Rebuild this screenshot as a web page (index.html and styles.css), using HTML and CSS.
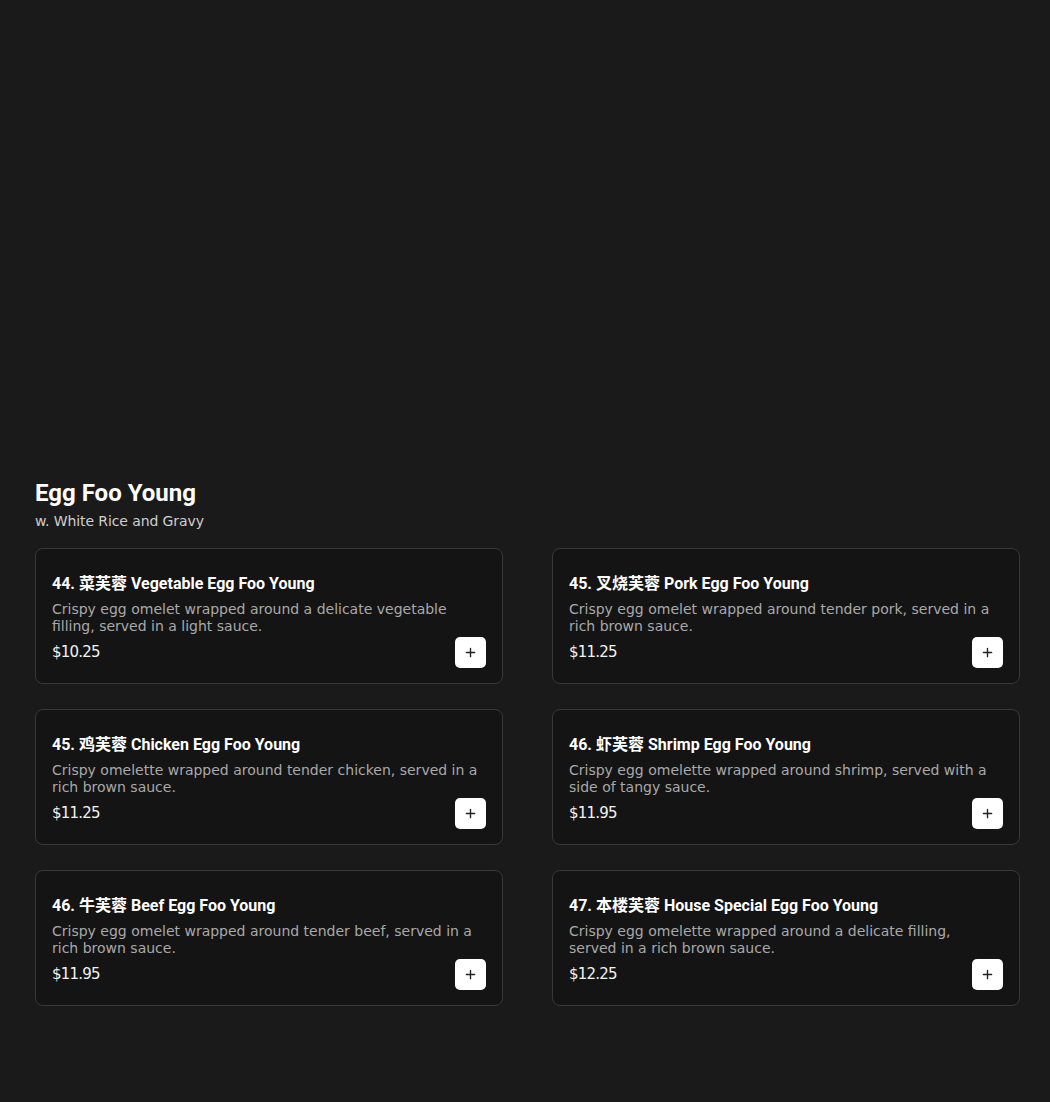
FILE: index.html
```html
<!DOCTYPE html>
<html lang="en">
<head>
<meta charset="utf-8">
<title>Egg Foo Young</title>
<link rel="stylesheet" href="styles.css">
</head>
<body>
<main class="page">
  <section class="category">
    <header class="category-head">
      <h2 class="category-title">Egg Foo Young</h2>
      <p class="category-sub">w. White Rice and Gravy</p>
    </header>
    <div class="grid">
      <article class="card">
        <h3 class="item-name">44. 菜芙蓉 Vegetable Egg Foo Young</h3>
        <p class="item-desc">Crispy egg omelet wrapped around a delicate vegetable filling, served in a light sauce.</p>
        <div class="item-foot"><span class="price">$10.25</span><button class="add" aria-label="Add"><svg viewBox="0 0 12 12" width="11" height="11"><path d="M6 1.5v9M1.5 6h9" stroke="#222" stroke-width="1.5" stroke-linecap="round"/></svg></button></div>
      </article>
      <article class="card">
        <h3 class="item-name">45. 叉烧芙蓉 Pork Egg Foo Young</h3>
        <p class="item-desc">Crispy egg omelet wrapped around tender pork, served in a rich brown sauce.</p>
        <div class="item-foot"><span class="price">$11.25</span><button class="add" aria-label="Add"><svg viewBox="0 0 12 12" width="11" height="11"><path d="M6 1.5v9M1.5 6h9" stroke="#222" stroke-width="1.5" stroke-linecap="round"/></svg></button></div>
      </article>
      <article class="card">
        <h3 class="item-name">45. 鸡芙蓉 Chicken Egg Foo Young</h3>
        <p class="item-desc">Crispy omelette wrapped around tender chicken, served in a rich brown sauce.</p>
        <div class="item-foot"><span class="price">$11.25</span><button class="add" aria-label="Add"><svg viewBox="0 0 12 12" width="11" height="11"><path d="M6 1.5v9M1.5 6h9" stroke="#222" stroke-width="1.5" stroke-linecap="round"/></svg></button></div>
      </article>
      <article class="card">
        <h3 class="item-name">46. 虾芙蓉 Shrimp Egg Foo Young</h3>
        <p class="item-desc">Crispy egg omelette wrapped around shrimp, served with a side of tangy sauce.</p>
        <div class="item-foot"><span class="price">$11.95</span><button class="add" aria-label="Add"><svg viewBox="0 0 12 12" width="11" height="11"><path d="M6 1.5v9M1.5 6h9" stroke="#222" stroke-width="1.5" stroke-linecap="round"/></svg></button></div>
      </article>
      <article class="card">
        <h3 class="item-name">46. 牛芙蓉 Beef Egg Foo Young</h3>
        <p class="item-desc">Crispy egg omelet wrapped around tender beef, served in a rich brown sauce.</p>
        <div class="item-foot"><span class="price">$11.95</span><button class="add" aria-label="Add"><svg viewBox="0 0 12 12" width="11" height="11"><path d="M6 1.5v9M1.5 6h9" stroke="#222" stroke-width="1.5" stroke-linecap="round"/></svg></button></div>
      </article>
      <article class="card">
        <h3 class="item-name">47. 本楼芙蓉 House Special Egg Foo Young</h3>
        <p class="item-desc">Crispy egg omelette wrapped around a delicate filling, served in a rich brown sauce.</p>
        <div class="item-foot"><span class="price">$12.25</span><button class="add" aria-label="Add"><svg viewBox="0 0 12 12" width="11" height="11"><path d="M6 1.5v9M1.5 6h9" stroke="#222" stroke-width="1.5" stroke-linecap="round"/></svg></button></div>
      </article>
    </div>
  </section>
</main>
</body>
</html>
```
FILE: styles.css
```css
html, body {
  margin: 0;
  padding: 0;
  background: #1a1a1a;
}
body {
  font-family: "DejaVu Sans", "Noto Sans CJK SC", sans-serif;
  color: #f2f2f2;
  min-height: 1102px;
}
.page {
  padding: 477px 30px 0 35px;
}
.category-head {
  margin-bottom: 17px;
}
.category-title {
  margin: 0;
  font-family: Roboto, "Noto Sans CJK SC", sans-serif;
  font-weight: 700;
  font-size: 24px;
  line-height: 32px;
  color: #ffffff;
}
.category-sub {
  margin: 2px 0 0;
  font-size: 14px;
  line-height: 20px;
  letter-spacing: -0.1px;
  color: #cfcfcf;
}
.grid {
  display: grid;
  grid-template-columns: 468px 468px;
  column-gap: 49px;
  row-gap: 25px;
}
.card {
  box-sizing: border-box;
  height: 136px;
  background: #141414;
  border: 1px solid #383838;
  border-radius: 8px;
  padding: 25px 16px 15px 16px;
  display: flex;
  flex-direction: column;
}
.item-name {
  margin: 0;
  font-family: Roboto, "Noto Sans CJK SC", sans-serif;
  font-weight: 700;
  font-size: 16px;
  line-height: 20px;
  color: #ffffff;
}
.item-desc {
  margin: 7px 0 0;
  font-size: 14px;
  line-height: 17px;
  letter-spacing: 0;
  color: #a9a9a9;
  padding-right: 5px;
}
.item-foot {
  margin-top: auto;
  display: flex;
  align-items: center;
  justify-content: space-between;
}
.price {
  font-size: 15px;
  letter-spacing: -0.8px;
  line-height: 18px;
  padding-bottom: 2px;
  color: #f2f2f2;
}
.add {
  width: 31px;
  height: 31px;
  border: none;
  border-radius: 5px;
  background: #ffffff;
  display: flex;
  align-items: center;
  justify-content: center;
  padding: 0;
}
```
